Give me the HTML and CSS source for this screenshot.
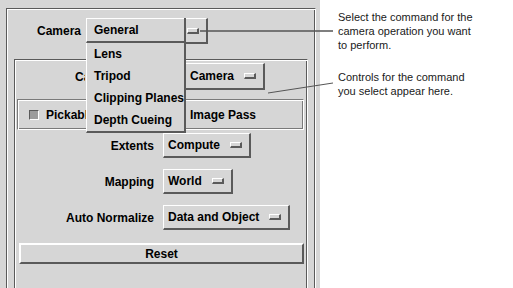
FILE: index.html
```html
<!DOCTYPE html>
<html>
<head>
<meta charset="utf-8">
<title>Camera</title>
<link rel="stylesheet" href="styles.css">
</head>
<body>
<div class="page">
  <div class="panel">
    <div class="frame outer">
      <div class="cam-row">
        <span class="lbl">Camera</span>
        <div class="opt opt-main"><span class="opt-text covered">General</span><span class="ind"></span></div>
      </div>
      <div class="frame inner">
        <div class="form form-top">
          <span class="lbl lbl-covered">Camera Type</span>
          <div class="cell"><div class="opt opt-cam"><span class="opt-text">Camera</span><span class="ind"></span></div></div>
        </div>
        <div class="toggles">
          <div class="tog"><span class="chk"></span><span>Pickable</span></div>
          <div class="tog"><span class="chk"></span><span>Image Pass</span></div>
        </div>
        <div class="form form-main">
          <span class="lbl">Extents</span>
          <div class="cell"><div class="opt"><span class="opt-text">Compute</span><span class="ind"></span></div></div>
          <span class="lbl">Mapping</span>
          <div class="cell"><div class="opt"><span class="opt-text">World</span><span class="ind"></span></div></div>
          <span class="lbl">Auto Normalize</span>
          <div class="cell"><div class="opt"><span class="opt-text">Data and Object</span><span class="ind"></span></div></div>
        </div>
        <div class="btn reset">Reset</div>
      </div>
    </div>
  </div>
  <div class="notes">
    <p class="note note-first">Select the command for the<br>camera operation you want<br>to perform.</p>
    <p class="note note-second">Controls for the command<br>you select appear here.</p>
  </div>

  <div class="menu">
    <div class="menu-item current">General</div>
    <div class="menu-item">Lens</div>
    <div class="menu-item">Tripod</div>
    <div class="menu-item">Clipping Planes</div>
    <div class="menu-item">Depth Cueing</div>
  </div>

  <svg class="callouts" width="513" height="288" viewBox="0 0 513 288">
    <line x1="200" y1="31" x2="333" y2="31" stroke="#555" stroke-width="1.6"/>
    <line x1="268" y1="93" x2="333" y2="83" stroke="#555" stroke-width="1"/>
  </svg>
</div>
</body>
</html>
```

FILE: styles.css
```css
* { box-sizing: border-box; margin: 0; padding: 0; }
html, body { width: 513px; height: 288px; overflow: hidden; background: #fff; }
body { font-family: "Liberation Sans", Arial, Helvetica, sans-serif; color: #000; }

.page { position: relative; display: flex; width: 513px; height: 288px; }

.panel {
  flex: none;
  width: 320px;
  height: 288px;
  background: #d6d6d6;
  padding: 8px 0 0 6px;
  overflow: hidden;
}

/* etched-in frame, open at the bottom */
.frame {
  border-top: 1px solid #5a5a5a;
  border-left: 1px solid #5a5a5a;
  border-right: 1px solid #fff;
  box-shadow: inset 1px 1px 0 #fff, inset -1px 0 0 #5a5a5a;
}

.outer { width: 310px; height: 300px; padding: 9px 0 0 30px; }

.lbl { font-size: 12px; font-weight: bold; white-space: nowrap; }

.cam-row { display: flex; align-items: center; gap: 5px; height: 26px; }

.opt {
  display: inline-flex;
  align-items: center;
  height: 25px;
  padding: 0 7px 0 4px;
  border-style: solid;
  border-width: 1px 2px 2px 1px;
  border-color: #fff #5a5a5a #5a5a5a #fff;
  font-size: 12px;
  font-weight: bold;
  white-space: nowrap;
}
.opt-text { margin-right: 10px; }
/* text that lies fully under the open popup menu */
.covered { visibility: hidden; }
.ind {
  width: 12px;
  height: 6px;
  border-style: solid;
  border-width: 1px 2px 2px 1px;
  border-color: #fff #5a5a5a #5a5a5a #fff;
}
.opt-main { width: 122px; height: 26px; justify-content: space-between; }
.opt-cam { height: 27px; padding-left: 26px; }

.inner { width: 294px; height: 300px; margin: 15px 0 0 -23px; }

.form {
  display: grid;
  grid-template-columns: 139px auto;
  column-gap: 9px;
  align-items: center;
}
.form .lbl { text-align: right; }
/* label partly hidden by the popup: only its first letters show */
.form .lbl-covered {
  justify-self: start;
  width: 10px;
  margin-left: 60px;
  overflow: hidden;
  text-align: left;
}
.cell { display: flex; }
.form-top { margin-top: 3px; }
.form-main { margin-top: 3px; grid-auto-rows: 25px; row-gap: 11px; }

.toggles {
  display: grid;
  grid-template-columns: 144px auto;
  align-items: center;
  width: 287px;
  height: 31px;
  margin: 9px 0 0 2px;
  padding-left: 11px;
  border-top: 1px solid #7a7a7a;
  border-left: 1px solid #7a7a7a;
  border-right: 1px solid #fff;
  border-bottom: 1px solid #fff;
  box-shadow: inset 1px 1px 0 #fff, inset -1px -1px 0 #7a7a7a;
  font-size: 12px;
  font-weight: bold;
}
.tog { display: flex; align-items: center; gap: 7px; white-space: nowrap; }
.chk {
  flex: none;
  width: 10px;
  height: 10px;
  background: #9c9c9c;
  border-top: 1px solid #5a5a5a;
  border-left: 1px solid #5a5a5a;
  border-right: 1px solid #fff;
  border-bottom: 1px solid #fff;
}

.btn {
  display: flex;
  align-items: center;
  justify-content: center;
  border-style: solid;
  border-width: 2px;
  border-color: #fff #5a5a5a #5a5a5a #fff;
  font-size: 12px;
  font-weight: bold;
}
.reset { width: 285px; height: 21px; margin: 13px 0 0 4px; }

/* popup menu over the option button */
.menu {
  position: absolute;
  left: 86px;
  top: 18px;
  width: 100px;
  height: 115px;
  background: #d6d6d6;
  border-left: 1px solid #fff;
  border-right: 2px solid #5a5a5a;
  border-bottom: 2px solid #5a5a5a;
  font-size: 12px;
  font-weight: bold;
  white-space: nowrap;
}
.menu-item { height: 22px; line-height: 22px; padding-left: 7px; }
.menu-item.current {
  height: 25px;
  line-height: 22px;
  margin-left: -1px;
  padding-left: 7px;
  border-style: solid;
  border-width: 1px 0 2px 1px;
  border-color: #fff #5a5a5a #5a5a5a #fff;
}

.notes { flex: 1; padding: 10px 0 0 18px; }
.note { font-size: 11px; line-height: 14px; color: #1a1a1a; }
.note-second { margin-top: 18px; }

.callouts { position: absolute; left: 0; top: 0; pointer-events: none; }
```
